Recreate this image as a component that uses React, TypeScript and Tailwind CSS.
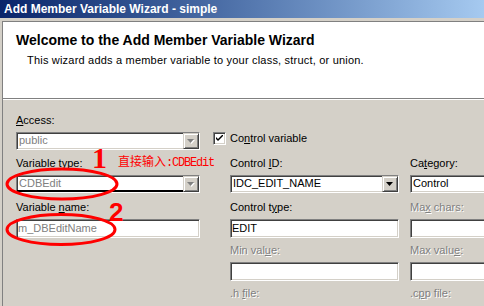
import React from "react";

const sunken =
  "border border-t-[#808080] border-l-[#808080] border-b-white border-r-white shadow-[inset_1px_1px_0_#404040,inset_-1px_-1px_0_#d4d0c8]";
const raised =
  "border border-t-[#d4d0c8] border-l-[#d4d0c8] border-b-[#404040] border-r-[#404040] shadow-[inset_1px_1px_0_#ffffff,inset_-1px_-1px_0_#808080] bg-[#d4d0c8]";

function Label({
  pre,
  u,
  post,
  disabled,
}: {
  pre: string;
  u: string;
  post: string;
  disabled?: boolean;
}) {
  return (
    <div
      className={
        "h-[13px] text-[11px] leading-[13px] whitespace-nowrap " +
        (disabled ? "text-[#808080] [text-shadow:1px_1px_0_#ffffff]" : "text-black")
      }
    >
      {pre}
      <span className="underline underline-offset-[1px]">{u}</span>
      {post}
    </div>
  );
}

function Arrow({ disabled }: { disabled?: boolean }) {
  return (
    <svg width="8" height="5" viewBox="0 0 8 5" className="block">
      {disabled && <polygon points="1,1 8,1 4.5,5" fill="#ffffff" />}
      <polygon points="0,0 7,0 3.5,4" fill={disabled ? "#808080" : "#000000"} />
    </svg>
  );
}

function Combo({
  text,
  grayText,
  disabledBtn,
  focusLine,
}: {
  text: string;
  grayText?: boolean;
  disabledBtn?: boolean;
  focusLine?: boolean;
}) {
  return (
    <div className={"h-[18px] bg-white flex mt-[5px] " + sunken}>
      <div
        className={
          "flex-1 pl-[2px] text-[11px] leading-[14px] whitespace-nowrap overflow-hidden " +
          (grayText ? "text-[#808080] " : "text-black ") +
          (focusLine ? "border-b-2 border-black" : "")
        }
      >
        {text}
      </div>
      <div className={"w-[16px] h-[16px] flex items-center justify-center " + raised}>
        <Arrow disabled={disabledBtn} />
      </div>
    </div>
  );
}

function Edit({ text, grayText }: { text?: string; grayText?: boolean }) {
  return (
    <div
      className={
        "h-[19px] bg-white mt-[5px] pl-[1px] text-[11px] leading-[16px] whitespace-nowrap overflow-hidden " +
        (grayText ? "text-[#808080] " : "text-black ") +
        sunken
      }
    >
      {text}
    </div>
  );
}

export default function App() {
  return (
    <div className="relative w-[484px] h-[306px] overflow-hidden bg-[#d4d0c8] font-['Liberation_Sans',Arial,sans-serif]">
      {/* Title bar */}
      <div className="h-[18px] bg-linear-to-r from-[#0a246a] to-[#a6caf0] text-white font-bold text-[12px] leading-[18px] pl-[4px] whitespace-nowrap">
        Add Member Variable Wizard - simple
      </div>

      {/* Client area */}
      <div className="mt-[3px] ml-[2px] border-l border-t border-[#808080] h-[285px]">
        {/* Header */}
        <div className="bg-white h-[77px] border-b border-[#808080] pl-[13px] pt-[11px]">
          <div className="font-bold text-[14px] leading-[15px] whitespace-nowrap">
            Welcome to the Add Member Variable Wizard
          </div>
          <div className="mt-[6px] ml-[11px] text-[11px] leading-[13px] tracking-[0.2px] whitespace-nowrap">
            This wizard adds a member variable to your class, struct, or union.
          </div>
        </div>
        <div className="h-px bg-white" />

        {/* Body */}
        <div className="pl-[13px] pt-[14px] flex flex-col">
          {/* Row A */}
          <div className="flex items-start">
            <div className="w-[184px] shrink-0">
              <Label pre="" u="A" post="ccess:" />
              <Combo text="public" grayText disabledBtn />
            </div>
            <div className="ml-[13px] mt-[18px] flex items-center">
              <div className={"w-[13px] h-[13px] bg-white flex items-center justify-center " + sunken}>
                <svg width="7" height="7" viewBox="0 0 7 7" className="block">
                  <path d="M0 2 L0 4 L2 6 L7 1 L7 -1 L2 4 Z" fill="#000" />
                </svg>
              </div>
              <div className="ml-[4px]">
                <Label pre="Co" u="n" post="trol variable" />
              </div>
            </div>
          </div>

          {/* Row B */}
          <div className="flex items-start mt-[7px]">
            <div className="w-[184px] shrink-0">
              <Label pre="Variable " u="t" post="ype:" />
              <Combo text="CDBEdit" grayText disabledBtn focusLine />
            </div>
            <div className="ml-[30px] w-[169px] shrink-0">
              <Label pre="Control " u="I" post="D:" />
              <Combo text="IDC_EDIT_NAME" />
            </div>
            <div className="ml-[11px] w-[200px] shrink-0">
              <Label pre="Ca" u="t" post="egory:" />
              <Combo text="Control" />
            </div>
          </div>

          {/* Row C */}
          <div className="flex items-start mt-[8px]">
            <div className="w-[184px] shrink-0">
              <Label pre="Variable " u="n" post="ame:" />
              <Edit text="m_DBEditName" grayText />
            </div>
            <div className="ml-[30px] w-[169px] shrink-0">
              <Label pre="Control t" u="y" post="pe:" />
              <Edit text="EDIT" />
            </div>
            <div className="ml-[11px] w-[200px] shrink-0">
              <Label pre="Ma" u="x" post=" chars:" disabled />
              <Edit />
            </div>
          </div>

          {/* Row D */}
          <div className="flex items-start mt-[6px]">
            <div className="w-[184px] shrink-0" />
            <div className="ml-[30px] w-[169px] shrink-0">
              <Label pre="Min val" u="u" post="e:" disabled />
              <Edit />
            </div>
            <div className="ml-[11px] w-[200px] shrink-0">
              <Label pre="Max valu" u="e" post=":" disabled />
              <Edit />
            </div>
          </div>

          {/* Row E */}
          <div className="flex items-start mt-[6px]">
            <div className="w-[184px] shrink-0" />
            <div className="ml-[30px] w-[169px] shrink-0">
              <Label pre=".h " u="f" post="ile:" disabled />
            </div>
            <div className="ml-[11px] w-[200px] shrink-0">
              <Label pre=".c" u="p" post="p file:" disabled />
            </div>
          </div>
        </div>
      </div>

      {/* Red annotations */}
      <svg
        className="absolute left-0 top-0 pointer-events-none"
        width="484"
        height="306"
        viewBox="0 0 484 306"
      >
        <ellipse cx="62" cy="184" rx="55" ry="15" fill="none" stroke="#ff0000" strokeWidth="3" />
        <ellipse cx="61" cy="229.5" rx="54" ry="15" fill="none" stroke="#ff0000" strokeWidth="3" />
      </svg>
      <div className="absolute left-[92px] top-[143px] text-[#ff0000] font-bold text-[30px] leading-[30px] font-['Liberation_Serif',serif]">
        1
      </div>
      <div className="absolute left-[109px] top-[199px] text-[#ff0000] font-bold text-[26px] leading-[26px] font-['Liberation_Sans',sans-serif]">
        2
      </div>
      <div className="absolute left-[118px] top-[154px] text-[#ff0000] whitespace-nowrap flex items-baseline leading-[14px]">
        <span className="text-[12px] font-['Noto_Sans_CJK_SC',sans-serif]">直接输入</span>
        <span className="text-[12px] tracking-[-1.2px] font-['Liberation_Mono',monospace]">:CDBEdit</span>
      </div>
    </div>
  );
}
